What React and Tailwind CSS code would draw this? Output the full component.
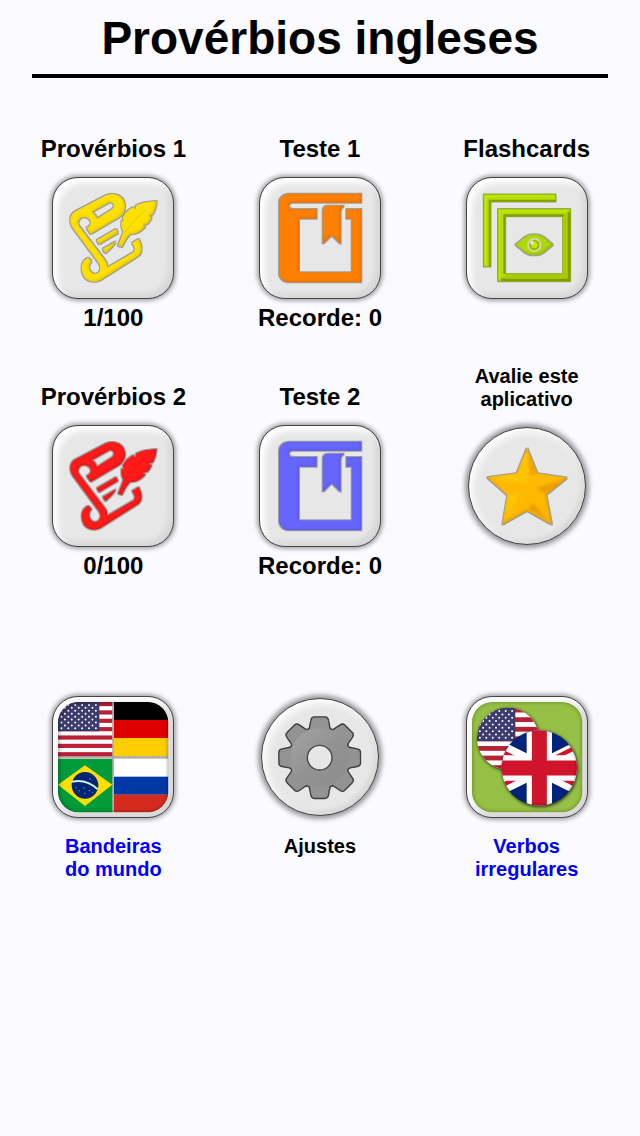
import React, { useId } from 'react';
import clsx from 'clsx';

// All icons share one canvas, three units per pixel
const Icon = ({ round, children }) => (
  <svg viewBox={round ? '45 45 348 348' : '39 39 360 360'} className="block w-full h-full" aria-hidden="true">
    {children}
  </svg>
);

const SharedDefs = () => (
  <svg className="absolute w-0 h-0" aria-hidden="true">
    <defs>
      <filter id="bevel" x="-10%" y="-10%" width="120%" height="120%" colorInterpolationFilters="sRGB">
        <feMorphology in="SourceAlpha" operator="dilate" radius="1.5" result="fat" />
        <feFlood floodColor="#333" floodOpacity="0.4" />
        <feComposite in2="fat" operator="in" result="rim" />
        <feGaussianBlur in="SourceAlpha" stdDeviation="5" result="blur" />
        <feOffset in="blur" dx="-4" dy="-4" result="shifted" />
        <feComposite in="SourceAlpha" in2="shifted" operator="out" result="low" />
        <feFlood floodColor="#000" floodOpacity="0.14" />
        <feComposite in2="low" operator="in" result="shade" />
        <feMerge>
          <feMergeNode in="rim" />
          <feMergeNode in="SourceGraphic" />
          <feMergeNode in="shade" />
        </feMerge>
      </filter>
      <filter id="soft" x="-10%" y="-10%" width="120%" height="120%">
        <feGaussianBlur stdDeviation="5" />
      </filter>
    </defs>
  </svg>
);

const ScrollIcon = ({ color }) => (
  <Icon>
    <g filter="url(#bevel)" fill={color}>
      <path
        fillRule="evenodd"
        d="M98 188 C86 172 88 148 108 138 L195 92 C216 82 240 88 250 105 C260 122 256 142 240 155 L152 207 L139 188 C148 186 155 178 151 168 C146 154 124 154 118 164 C113 172 114 178 118 184 L194 284 C202 294 202 300 201 308 L281 262 C287 254 284 246 276 234 L296 222 C307 242 309 262 294 274 L190 340 C170 356 145 352 132 335 C120 315 122 288 145 278 L155 289 C145 298 146 312 153 321 C162 330 176 328 180 316 C182 306 180 300 176 294 Z M156 141 L206 113 C219 108 227 122 217 132 L171 161 C168 152 163 146 156 141 Z"
      />
      <path d="M170 226 L228 192 L234 204 L177 238 Z" />
      <path d="M188 252 L228 229 C223 240 212 252 196 265 Z" />
      <path d="M350 108 C318 110 302 114 288 122 L286 134 L280 126 C266 134 254 144 248 158 L252 170 L245 166 C242 182 245 190 250 199 C246 214 240 228 234 242 L246 246 C252 234 260 218 270 208 C290 208 306 198 316 184 L308 180 L322 177 C330 168 333 162 335 156 L325 153 L339 148 C345 136 349 124 350 108 Z" />
    </g>
    <path d="M254 204 C272 178 292 156 316 136" fill="none" stroke="#000" strokeOpacity="0.12" strokeWidth="3" />
  </Icon>
);

const BookIcon = ({ color }) => (
  <Icon>
    <g filter="url(#bevel)" fill={color}>
      <path d="M343 86 H125 C108 88 96 100 96 115 V325 C98 340 108 350 125 352 H343 V132 H298 V161 H314 V322 H156 V161 H209 V132 H136 C122 132 122 113 136 113 H343 Z" />
      <path d="M227 237 V138 C228 127 234 122 245 122 H292 C284 126 281 132 281 140 V237 L254 211 Z" />
    </g>
  </Icon>
);

const CardsIcon = () => (
  <Icon>
    <g fill="#b6de00" stroke="#66791a" strokeWidth="2">
      <path d="M88 87 H306 V111 H111 V306 H88 Z" />
      <path fillRule="evenodd" d="M131 131 H350 V350 H131 Z M155 155 V326 H326 V155 Z" />
    </g>
    <path d="M107 305 V107 H305 M151 326 V151 H330" fill="none" stroke="#839f00" strokeWidth="6" />
    <path d="M132 349 L155 326 H326 V155 L349 132 V349 Z" fill="#a8cc00" />
    <path d="M142 345 H345 V142" fill="none" stroke="#829d00" strokeWidth="7" />
    <path d="M138 340 V138 H340 M95 300 V94 H300" fill="none" stroke="#c0e806" strokeWidth="5" />
    <g filter="url(#bevel)">
      <path d="M184 239 C205 226 214 208 241 208 C267 208 278 226 297 239 C278 252 267 271 241 271 C214 271 205 252 184 239 Z" fill="#b0d800" />
    </g>
    <circle cx="241" cy="240" r="19" fill="#aacf00" stroke="#d5d8c0" strokeWidth="5" />
    <circle cx="241" cy="240" r="12" fill="#c0e800" stroke="#71831c" strokeWidth="2" />
    <circle cx="234" cy="233" r="6" fill="#e3e6cf" />
  </Icon>
);

const StarIcon = () => (
  <Icon round>
    <g filter="url(#bevel)">
      <path d="M219 104 L250 181 L340 194 L277 245 L294 335 L219 293 L145 335 L160 247 L99 193 L188 181 Z" fill="#ffb900" />
    </g>
    <g filter="url(#soft)">
      <g fill="#ffd000" opacity="0.6">
        <path d="M219 116 L194 183 L219 215 Z" />
        <path d="M112 196 L188 185 L212 212 Z" />
        <path d="M153 322 L165 248 L195 238 Z" />
      </g>
      <g fill="#e08a00" opacity="0.6">
        <path d="M324 200 L274 242 L246 226 Z" />
        <path d="M284 322 L222 288 L236 270 Z" />
        <path d="M221 124 L246 182 L232 190 Z" />
      </g>
    </g>
  </Icon>
);

const TOOTH_ANGLES = [0, 45, 90, 135, 180, 225, 270, 315];

const GearIcon = () => {
  const id = useId();
  const body = (
    <>
      <circle cx="218" cy="221" r="88" />
      {TOOTH_ANGLES.map((angle) => (
        <path
          key={angle}
          d="M178 146 Q190 142 192 130 L196 109 Q197 103 202 103 H234 Q239 103 240 109 L244 130 Q246 142 258 146 Z"
          transform={`rotate(${angle} 218 221)`}
        />
      ))}
    </>
  );

  return (
    <Icon round>
      <defs>
        <linearGradient id={id} x1="0" y1="0" x2="1" y2="1">
          <stop offset="0" stopColor="#a4a4a4" />
          <stop offset="0.5" stopColor="#929292" />
          <stop offset="1" stopColor="#8c8c8c" />
        </linearGradient>
      </defs>
      <g fill="#3c3c3c" stroke="#3c3c3c" strokeWidth="13" strokeLinejoin="round">{body}</g>
      <g fill="#939393" stroke="#939393" strokeWidth="5" strokeLinejoin="round">{body}</g>
      <circle cx="218" cy="221" r="88" fill={`url(#${id})`} />
      <circle cx="218" cy="221" r="37" fill="#e6e6e6" stroke="#444" strokeWidth="4" />
    </Icon>
  );
};

// Flags
const UsFlag = ({ x, y, width, height, cantonWidth }) => {
  const stripe = height / 13;
  const stepX = cantonWidth / 12;
  const stepY = (stripe * 7) / 10;
  const stars = [];
  for (let row = 1; row <= 9; row++) {
    for (let col = 1; col <= 11; col++) {
      if ((row + col) % 2 === 0) {
        stars.push(<circle key={`${row}-${col}`} cx={x + col * stepX} cy={y + row * stepY} r="3" />);
      }
    }
  }

  return (
    <g>
      <rect x={x} y={y} width={width} height={height} fill="#fff" />
      {[0, 2, 4, 6, 8, 10, 12].map((n) => (
        <rect key={n} x={x} y={y + n * stripe} width={width} height={stripe} fill="#b82035" />
      ))}
      <rect x={x} y={y} width={cantonWidth} height={stripe * 7} fill="#3c3b6e" />
      <g fill="#fff">{stars}</g>
    </g>
  );
};

const WorldFlagsIcon = () => {
  const id = useId();
  return (
    <Icon>
      <defs>
        <clipPath id={id}>
          <rect x="54" y="54" width="331" height="331" rx="62" />
        </clipPath>
      </defs>
      <g clipPath={`url(#${id})`}>
        <rect x="54" y="54" width="331" height="331" fill="#c8c8c2" />
        <UsFlag x={54} y={54} width={163} height={163} cantonWidth={124} />
        <rect x="222" y="54" width="163" height="55" fill="#000" />
        <rect x="222" y="108" width="163" height="55" fill="#dd0000" />
        <rect x="222" y="162" width="163" height="54" fill="#ffce00" />
        <rect x="222" y="225" width="163" height="54" fill="#fff" />
        <rect x="222" y="278" width="163" height="54" fill="#0039a6" />
        <rect x="222" y="332" width="163" height="54" fill="#d52b1e" />
        <rect x="54" y="225" width="163" height="161" fill="#009b3a" />
        <path d="M54 302 L135 244 L217 302 L135 366 Z" fill="#fedf00" />
        <circle cx="135" cy="304" r="40" fill="#002776" />
        <path d="M96 293 C124 287 152 296 173 316" fill="none" stroke="#d4f0e0" strokeWidth="6" />
        <g fill="#8597c8">
          <circle cx="108" cy="311" r="2" />
          <circle cx="118" cy="320" r="2" />
          <circle cx="132" cy="312" r="2" />
          <circle cx="134" cy="328" r="2" />
          <circle cx="148" cy="320" r="2" />
          <circle cx="158" cy="325" r="2" />
          <circle cx="150" cy="285" r="2" />
        </g>
        <path d="M54 219 H385 M219 54 V385" stroke="#8b8b84" strokeWidth="3" strokeDasharray="5 2" />
        <rect x="56" y="56" width="330" height="330" rx="62" fill="none" stroke="#000" strokeOpacity="0.3" strokeWidth="8" filter="url(#soft)" />
      </g>
    </Icon>
  );
};

const VerbsIcon = () => {
  const id = useId();
  return (
    <Icon>
      <defs>
        <clipPath id={`${id}-us`}>
          <circle cx="162" cy="164" r="93" />
        </clipPath>
        <clipPath id={`${id}-uk`}>
          <circle cx="256" cy="252" r="113" />
        </clipPath>
        <clipPath id={`${id}-tile`}>
          <rect x="54" y="54" width="331" height="331" rx="62" />
        </clipPath>
      </defs>
      <g clipPath={`url(#${id}-tile)`}>
        <rect x="54" y="54" width="331" height="331" fill="#96bf45" />
        <rect x="54" y="54" width="331" height="331" rx="62" fill="none" stroke="#5d8021" strokeWidth="5" filter="url(#soft)" />
      </g>
      <circle cx="164" cy="167" r="95" opacity="0.6" filter="url(#soft)" />
      <g clipPath={`url(#${id}-us)`}>
        <UsFlag x={68} y={71} width={190} height={187} cantonWidth={116} />
      </g>
      <circle cx="258" cy="255" r="115" opacity="0.65" filter="url(#soft)" />
      <g clipPath={`url(#${id}-uk)`}>
        <rect x="140" y="138" width="232" height="230" fill="#00247d" />
        <path d="M31 140 L481 364 M31 364 L481 140" stroke="#fff" strokeWidth="45" />
        <path d="M256 259 L24 143 M248 252 L24 364 M256 245 L488 129 M264 252 L488 364" stroke="#cf142b" strokeWidth="13" />
        <path d="M256 138 V366 M142 252 H370" stroke="#fff" strokeWidth="76" />
        <path d="M256 138 V366 M142 252 H370" stroke="#cf142b" strokeWidth="45" />
        <circle cx="254" cy="250" r="118" fill="none" stroke="#000" strokeOpacity="0.35" strokeWidth="8" filter="url(#soft)" />
      </g>
    </Icon>
  );
};

const Face = ({ round, children }) => (
  <span
    className={clsx(
      'block border border-[#444] bg-[#e7e7e7]',
      round
        ? 'm-0.5 size-[118px] rounded-full shadow-[0_0_5px_3px_rgba(0,0,0,0.4),inset_4px_4px_8px_#fff,inset_-3px_-3px_5px_rgba(0,0,0,0.08)]'
        : 'size-[122px] rounded-[26px] shadow-[0_0_4px_2px_rgba(0,0,0,0.35),inset_5px_5px_6px_#fff,inset_-4px_-4px_6px_rgba(0,0,0,0.08)]'
    )}
  >
    {children}
  </span>
);

const MenuItem = ({ title, caption, round, children }) => (
  <button type="button" className="flex flex-col items-center text-center cursor-pointer">
    {title && (
      <span
        className={clsx(
          'mb-3.5 flex h-[46px] items-end whitespace-pre-line',
          round ? 'text-[20px] leading-[23px]' : 'text-[24px] leading-[28px]'
        )}
      >
        {title}
      </span>
    )}
    <Face round={round}>{children}</Face>
    {caption && (
      <span
        className={clsx(
          'whitespace-pre-line',
          title ? 'mt-[5px] text-[24px] leading-[28px]' : 'mt-[17px] text-[20px] leading-[23px]'
        )}
      >
        {caption}
      </span>
    )}
  </button>
);

const AppLink = ({ label, children }) => (
  <a href="#" className="flex flex-col items-center text-center text-[#0000fa]">
    <Face>{children}</Face>
    <span className="mt-[17px] whitespace-pre-line text-[20px] leading-[23px]">{label}</span>
  </a>
);

const App = () => {
  return (
    <div className="min-h-screen bg-[#fbfaff] font-['Liberation_Sans',Arial,sans-serif] font-bold text-black">
      <SharedDefs />

      {/* Header */}
      <header className="mx-8 border-b-4 border-black pt-3 pb-2.5">
        <h1 className="text-center text-[46px] leading-[52px]">Provérbios ingleses</h1>
      </header>

      <main className="px-2.5 pt-[39px]">
        {/* Games */}
        <div className="grid grid-cols-3 items-start justify-items-center gap-y-[33px]">
          <MenuItem title="Provérbios 1" caption="1/100">
            <ScrollIcon color="#ffe100" />
          </MenuItem>
          <MenuItem title="Teste 1" caption="Recorde: 0">
            <BookIcon color="#ff8000" />
          </MenuItem>
          <MenuItem title="Flashcards">
            <CardsIcon />
          </MenuItem>
          <MenuItem title="Provérbios 2" caption="0/100">
            <ScrollIcon color="#ff1a1a" />
          </MenuItem>
          <MenuItem title="Teste 2" caption="Recorde: 0">
            <BookIcon color="#6666ff" />
          </MenuItem>
          <MenuItem title={'Avalie este\naplicativo'} round>
            <StarIcon />
          </MenuItem>
        </div>

        {/* Settings and other apps */}
        <div className="mt-[116px] grid grid-cols-3 items-start justify-items-center">
          <AppLink label={'Bandeiras\ndo mundo'}>
            <WorldFlagsIcon />
          </AppLink>
          <MenuItem caption="Ajustes" round>
            <GearIcon />
          </MenuItem>
          <AppLink label={'Verbos\nirregulares'}>
            <VerbsIcon />
          </AppLink>
        </div>
      </main>
    </div>
  );
};

export default App;
